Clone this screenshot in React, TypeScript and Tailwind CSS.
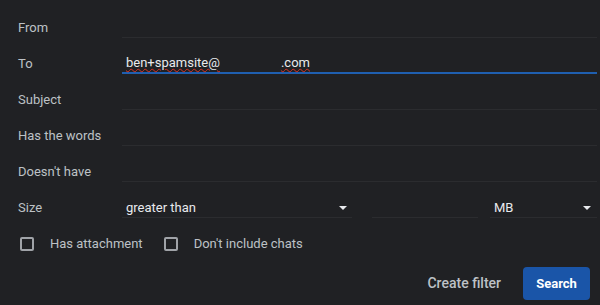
import React from "react";

const Caret = () => (
  <svg width="8" height="4" viewBox="0 0 8 4" className="shrink-0">
    <path d="M0 0 L8 0 L4 4 Z" fill="#e8eaed" />
  </svg>
);

const Row = ({ label, children }: { label: string; children?: React.ReactNode }) => (
  <div className="flex h-9 items-center">
    <div className="w-[122px] shrink-0 pl-[18px] text-[13px] text-[#bdc1c6]">{label}</div>
    <div className="flex-1">{children}</div>
  </div>
);

const Field = ({ blue, children }: { blue?: boolean; children?: React.ReactNode }) => (
  <div
    className={
      "flex h-5 items-center pl-1 text-[13px] text-[#e8eaed] " +
      (blue ? "border-b-2 border-[#1f5fb0]" : "border-b border-[#2b2c2f]")
    }
  >
    {children}
  </div>
);

const Check = ({ label }: { label: string }) => (
  <div className="flex items-center">
    <div className="h-[14px] w-[14px] rounded-[2px] border-2 border-[#a0a3a8]" />
    <span className="ml-4 text-[13px] text-[#bdc1c6]">{label}</span>
  </div>
);

export default function App() {
  return (
    <div
      className="h-[305px] w-[600px] overflow-hidden bg-[#202124] pt-[10px] pr-[3px]"
      style={{ fontFamily: "Roboto, 'Liberation Sans', sans-serif" }}
    >
      <Row label="From">
        <Field />
      </Row>
      <Row label="To">
        <Field blue>
          <span className="underline decoration-wavy decoration-[#d93025] decoration-1 underline-offset-1">
            ben+spamsite@
          </span>
          <span className="inline-block w-[61px]" />
          <span className="underline decoration-wavy decoration-[#d93025] decoration-1 underline-offset-1">
            .com
          </span>
        </Field>
      </Row>
      <Row label="Subject">
        <Field />
      </Row>
      <Row label="Has the words">
        <Field />
      </Row>
      <Row label="Doesn't have">
        <Field />
      </Row>
      <Row label="Size">
        <div className="flex items-center">
          <div className="w-[230px]">
            <Field>
              <span className="flex-1">greater than</span>
              <span className="mr-[5px]">
                <Caret />
              </span>
            </Field>
          </div>
          <div className="ml-[20px] w-[106px]">
            <Field />
          </div>
          <div className="ml-[12px] flex-1">
            <Field>
              <span className="flex-1">MB</span>
              <span className="mr-[6px]">
                <Caret />
              </span>
            </Field>
          </div>
        </div>
      </Row>
      <div className="flex h-9 items-center gap-[21px] pl-[20px]">
        <Check label="Has attachment" />
        <Check label="Don't include chats" />
      </div>
      <div className="mt-[5px] flex items-center justify-end">
        <button className="mr-[22px] text-[14px] font-medium text-[#bdc1c6]">Create filter</button>
        <button className="h-[33px] w-[67px] rounded-[4px] bg-[#1a55a8] text-[13px] font-bold text-white">
          Search
        </button>
        <div className="w-[7px]" />
      </div>
    </div>
  );
}
